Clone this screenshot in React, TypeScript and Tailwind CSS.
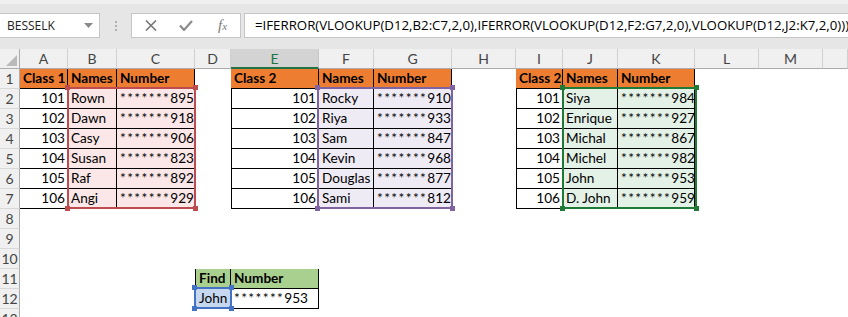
import React from 'react';

type Sel = 'red' | 'purple' | 'green' | 'blue';

interface Cell {
  text?: string;
  stars?: string;
  cls: string;
}

const COLS = ['A', 'B', 'C', 'D', 'E', 'F', 'G', 'H', 'I', 'J', 'K', 'L', 'M', 'N'];

const HEAD = 'bg-[#ed7d31] font-bold px-[3px] border-r border-b border-black';
const NUM = 'text-right pr-[2px] border-r border-b border-black';
const NUM_FIRST = 'text-right pr-[2px] border-l border-r border-b border-black';
const NAME_RED = 'bg-[#fbe7e7] px-[3px] border-r border-b border-black';
const NAME_PURPLE = 'bg-[#efebf5] px-[3px] border-r border-b border-black';
const NAME_GREEN = 'bg-[#e4f1e6] px-[3px] border-r border-b border-black';
const STAR_RED = 'bg-[#fbe7e7] px-[3px] border-r border-b border-black';
const STAR_PURPLE = 'bg-[#efebf5] px-[3px] border-r border-b border-black';
const STAR_GREEN = 'bg-[#e4f1e6] px-[3px] border-r border-b border-black';
const FIND_HEAD = 'bg-[#a9d08e] font-bold px-[3px] border-r border-b border-black';
const FIND_HEAD_FIRST = 'bg-[#a9d08e] font-bold px-[3px] border-l border-r border-b border-black';

const table1 = [
  ['101', 'Rown', '895'],
  ['102', 'Dawn', '918'],
  ['103', 'Casy', '906'],
  ['104', 'Susan', '823'],
  ['105', 'Raf', '892'],
  ['106', 'Angi', '929'],
];
const table2 = [
  ['101', 'Rocky', '910'],
  ['102', 'Riya', '933'],
  ['103', 'Sam', '847'],
  ['104', 'Kevin', '968'],
  ['105', 'Douglas', '877'],
  ['106', 'Sami', '812'],
];
const table3 = [
  ['101', 'Siya', '984'],
  ['102', 'Enrique', '927'],
  ['103', 'Michal', '867'],
  ['104', 'Michel', '982'],
  ['105', 'John', '953'],
  ['106', 'D. John', '959'],
];

const buildCells = () => {
  const cells: Record<string, Cell> = {};
  cells.A1 = { text: 'Class 1', cls: HEAD };
  cells.B1 = { text: 'Names', cls: HEAD };
  cells.C1 = { text: 'Number', cls: HEAD };
  cells.E1 = { text: 'Class 2', cls: HEAD };
  cells.F1 = { text: 'Names', cls: HEAD };
  cells.G1 = { text: 'Number', cls: HEAD };
  cells.I1 = { text: 'Class 2', cls: HEAD };
  cells.J1 = { text: 'Names', cls: HEAD };
  cells.K1 = { text: 'Number', cls: HEAD };

  table1.forEach((r, i) => {
    cells[`A${i + 2}`] = { text: r[0], cls: NUM };
    cells[`B${i + 2}`] = { text: r[1], cls: NAME_RED };
    cells[`C${i + 2}`] = { stars: r[2], cls: STAR_RED };
  });
  table2.forEach((r, i) => {
    cells[`E${i + 2}`] = { text: r[0], cls: NUM_FIRST };
    cells[`F${i + 2}`] = { text: r[1], cls: NAME_PURPLE };
    cells[`G${i + 2}`] = { stars: r[2], cls: STAR_PURPLE };
  });
  table3.forEach((r, i) => {
    cells[`I${i + 2}`] = { text: r[0], cls: NUM_FIRST };
    cells[`J${i + 2}`] = { text: r[1], cls: NAME_GREEN };
    cells[`K${i + 2}`] = { stars: r[2], cls: STAR_GREEN };
  });

  cells.D11 = { text: 'Find', cls: FIND_HEAD_FIRST };
  cells.E11 = { text: 'Number', cls: FIND_HEAD };
  cells.D12 = { text: 'John', cls: 'bg-[#c6d8f0] px-[3px] border-l border-r border-b border-black' };
  cells.E12 = { stars: '953', cls: 'px-[3px] border-r border-b border-black' };
  return cells;
};

const SEL_BORDER: Record<Sel, string> = {
  red: 'border-[#be4b4e]',
  purple: 'border-[#8064a2]',
  green: 'border-[#1f7a36]',
  blue: 'border-[#4472c4]',
};
const SEL_HANDLE: Record<Sel, string> = {
  red: 'bg-[#be4b4e]',
  purple: 'bg-[#8064a2]',
  green: 'bg-[#1f7a36]',
  blue: 'bg-[#4472c4]',
};

const Selection = ({ color, pos }: { color: Sel; pos: string }) => (
  <div className={`absolute border-2 pointer-events-none ${SEL_BORDER[color]} ${pos}`}>
    <span className={`absolute -left-[4px] -top-[4px] w-[5px] h-[5px] ${SEL_HANDLE[color]}`} />
    <span className={`absolute -right-[4px] -top-[4px] w-[5px] h-[5px] ${SEL_HANDLE[color]}`} />
    <span className={`absolute -left-[4px] -bottom-[4px] w-[5px] h-[5px] ${SEL_HANDLE[color]}`} />
    <span className={`absolute -right-[4px] -bottom-[4px] w-[5px] h-[5px] ${SEL_HANDLE[color]}`} />
  </div>
);

const FormulaBar = () => (
  <div className="h-[49px] bg-[#e6e6e6] border-t-[4px] border-[#f0f0f0] pt-[9px] flex items-start font-['Open_Sans',sans-serif]">
    <div className="w-[100px] h-[25px] bg-white border border-[#c6c6c6] border-l-0 flex items-center justify-between pl-[7px] pr-[6px]">
      <span className="text-[12px] text-[#222]">BESSELK</span>
      <svg width="9" height="5" viewBox="0 0 9 5">
        <path d="M0 0h9L4.5 5z" fill="#8a8a8a" />
      </svg>
    </div>
    <div className="w-[31px] h-[25px] flex flex-col items-center justify-center gap-[2px]">
      <span className="w-[2px] h-[2px] bg-[#b0b0b0]" />
      <span className="w-[2px] h-[2px] bg-[#b0b0b0]" />
      <span className="w-[2px] h-[2px] bg-[#b0b0b0]" />
    </div>
    <div className="w-[110px] h-[25px] bg-white border border-[#c6c6c6] flex items-center">
      <svg className="ml-[13px]" width="12" height="11" viewBox="0 0 12 11">
        <path d="M1 0.5l10 10M11 0.5l-10 10" stroke="#777" strokeWidth="1.6" />
      </svg>
      <svg className="ml-[22px]" width="14" height="11" viewBox="0 0 14 11">
        <path d="M1 5.5l4 4.5L13 1" stroke="#8c8c8c" strokeWidth="2.2" fill="none" />
      </svg>
      <span className="ml-[25px] text-[#7a7a7a] italic font-['Liberation_Serif',serif] text-[15px] leading-none">
        f<span className="text-[11px]">x</span>
      </span>
    </div>
    <div className="ml-[3px] flex-1 h-[25px] bg-white border border-[#c6c6c6] border-r-0 overflow-hidden whitespace-nowrap pl-[10px] flex items-center">
      <span className="text-[13.25px] text-black">
        =IFERROR(VLOOKUP(D12,B2:C7,2,0),IFERROR(VLOOKUP(D12,F2:G7,2,0),VLOOKUP(D12,J2:K7,2,0)))
      </span>
    </div>
  </div>
);

export default function App() {
  const cells = buildCells();
  const rows = Array.from({ length: 13 }, (_, i) => i + 1);

  return (
    <div className="w-[848px] h-[317px] overflow-hidden bg-white font-['Lato',sans-serif]">
      <FormulaBar />
      <div className="relative grid grid-cols-[20px_48px_49px_78px_36px_88px_55px_78px_64px_47px_55px_77px_64px_64px_1fr] grid-rows-[20px_repeat(13,20px)] text-[13.6px] text-black leading-[19px]">
        {/* corner */}
        <div className="bg-[#f0f0f0] border-r border-b border-[#ababab] flex items-end justify-end p-[2px]">
          <svg width="11" height="11" viewBox="0 0 11 11">
            <path d="M11 0v11H0z" fill="#b9b9b9" />
          </svg>
        </div>
        {COLS.map((c) =>
          c === 'E' ? (
            <div
              key={c}
              className="bg-[#d3d3d3] border-r border-[#c6c6c6] border-b-2 border-b-[#217346] text-center text-[#217346] text-[14px] leading-[19px]"
            >
              {c}
            </div>
          ) : (
            <div key={c} className="bg-[#f0f0f0] border-r border-[#d0d0d0] border-b border-b-[#ababab] text-center text-[#444] text-[14px] leading-[19px]">
              {c === 'N' ? '' : c}
            </div>
          )
        )}

        {rows.map((r) => (
          <React.Fragment key={r}>
            <div className="bg-[#f0f0f0] border-r border-[#ababab] border-b border-b-[#d8d8d8] text-center text-[#444] text-[14px]">
              {r}
            </div>
            {COLS.map((c) => {
              const cell = cells[`${c}${r}`];
              if (!cell) return <div key={c} />;
              return (
                <div key={c} className={`whitespace-nowrap overflow-hidden ${cell.cls}`}>
                  {cell.stars ? (
                    <>
                      <span className="tracking-[1.4px]">*******</span>
                      {cell.stars}
                    </>
                  ) : (
                    cell.text
                  )}
                </div>
              );
            })}
          </React.Fragment>
        ))}

        <Selection color="red" pos="left-[67px] top-[38px] w-[129px] h-[122px]" />
        <Selection color="purple" pos="left-[317px] top-[38px] w-[136px] h-[122px]" />
        <Selection color="green" pos="left-[562px] top-[38px] w-[135px] h-[122px]" />
        <Selection color="blue" pos="left-[194px] top-[238px] w-[38px] h-[22px]" />
      </div>
    </div>
  );
}
